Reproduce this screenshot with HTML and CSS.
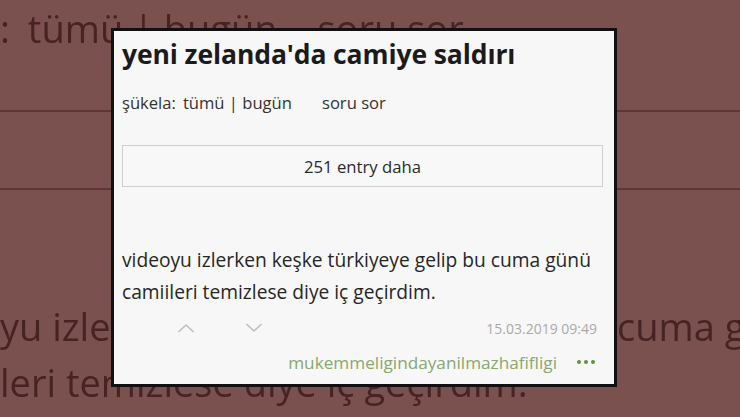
FILE: index.html
```html
<!DOCTYPE html>
<html lang="tr">
<head>
<meta charset="utf-8">
<title>yeni zelanda'da camiye saldırı</title>
<link rel="stylesheet" href="styles.css">
</head>
<body>
<div class="backdrop">
  <div class="bg-meta"><span class="bg-colon">:</span> tümü | bugün <span class="bg-ask">soru sor</span></div>
  <div class="bg-rule"></div>
  <div class="bg-gap"></div>
  <div class="bg-rule"></div>
  <div class="bg-line1"><span class="bg-left">yu izlerken keşke türkiyeye gelip bu</span><span>cuma günü</span></div>
  <div class="bg-line2">leri temizlese diye iç geçirdim.</div>
</div>

<div class="card">
  <h1 class="title">yeni zelanda'da camiye saldırı</h1>
  <div class="meta">
    <span>şükela:</span>
    <span class="meta-links">tümü <span class="sep">|</span> bugün</span>
    <span class="ask">soru sor</span>
  </div>
  <div class="more">251 entry daha</div>
  <p class="entry">videoyu izlerken keşke türkiyeye gelip bu cuma günü camiileri temizlese diye iç geçirdim.</p>
  <div class="footer">
    <div class="votes">
      <svg class="chev" width="18" height="10" viewBox="0 0 18 10"><path d="M1.5 9 L9 2 L16.5 9" fill="none" stroke="#bdbdbd" stroke-width="1.6"/></svg>
      <svg class="chev" width="18" height="10" viewBox="0 0 18 10"><path d="M1.5 1 L9 8 L16.5 1" fill="none" stroke="#bdbdbd" stroke-width="1.6"/></svg>
    </div>
    <span class="date">15.03.2019 09:49</span>
  </div>
  <div class="author-row">
    <span class="author">mukemmeligindayanilmazhafifligi</span>
    <span class="dots"><i></i><i></i><i></i></span>
  </div>
</div>
</body>
</html>
```
FILE: styles.css
```css
html, body {
  margin: 0;
  padding: 0;
}
body {
  width: 740px;
  height: 417px;
  overflow: hidden;
  background: #7a514f;
  font-family: "Open Sans", "Noto Sans", sans-serif;
  position: relative;
}
.backdrop {
  width: 740px;
  height: 417px;
  overflow: hidden;
  color: #482323;
  font-size: 38px;
  display: flex;
  flex-direction: column;
  filter: blur(0.6px);
}
.bg-meta {
  white-space: nowrap;
  height: 50px;
  line-height: 50px;
  margin-top: 3px;
  margin-left: 0;
}
.bg-colon {
  margin-right: 8px;
}
.bg-ask {
  margin-left: 30px;
}
.bg-rule {
  height: 2px;
  background: #5d3735;
  margin-top: 57px;
  flex: none;
}
.bg-gap {
  height: 19px;
  flex: none;
}
.bg-line1 {
  margin-top: 108px;
  height: 56px;
  line-height: 56px;
  display: flex;
  white-space: nowrap;
}
.bg-left {
  width: 617px;
  overflow: hidden;
  flex: none;
}
.bg-line2 {
  height: 56px;
  line-height: 56px;
  white-space: nowrap;
}

.card {
  position: absolute;
  left: 111px;
  top: 28px;
  width: 506px;
  height: 359px;
  box-sizing: border-box;
  border: 3px solid #111;
  background: #f7f7f7;
  padding: 0 11px 0 8px;
  display: flex;
  flex-direction: column;
  color: #222;
}
.title {
  margin: 7px 0 0;
  font-size: 26.5px;
  line-height: 32px;
  font-weight: 700;
  color: #1b1b1b;
  letter-spacing: -0.1px;
}
.meta {
  margin-top: 21px;
  display: flex;
  font-size: 16.6px;
  line-height: 24px;
  color: #333;
}
.meta-links {
  margin-left: 7px;
}
.sep {
  color: #333;
}
.ask {
  margin-left: 30px;
}
.more {
  margin-top: 30px;
  height: 42px;
  box-sizing: border-box;
  border: 1px solid #cfcfcf;
  background: #f8f8f8;
  display: flex;
  align-items: center;
  justify-content: center;
  font-size: 16.7px;
  color: #2a2a2a;
}
.entry {
  margin: 57px 0 0;
  font-size: 19.2px;
  line-height: 32px;
  color: #262626;
}
.footer {
  margin-top: 9px;
  display: flex;
  align-items: center;
  justify-content: space-between;
  height: 22px;
}
.votes {
  display: flex;
  gap: 50px;
  margin-left: 55px;
}
.date {
  font-size: 14px;
  color: #a9a9a9;
  margin-right: 6px;
}
.author-row {
  margin-top: 11px;
  display: flex;
  align-items: center;
  justify-content: flex-end;
  height: 24px;
}
.author {
  font-size: 17.2px;
  color: #88a86e;
}
.dots {
  display: flex;
  gap: 3px;
  margin-left: 20px;
  margin-right: 8px;
}
.dots i {
  display: block;
  width: 4px;
  height: 4px;
  border-radius: 50%;
  background: #5f9434;
}
```
